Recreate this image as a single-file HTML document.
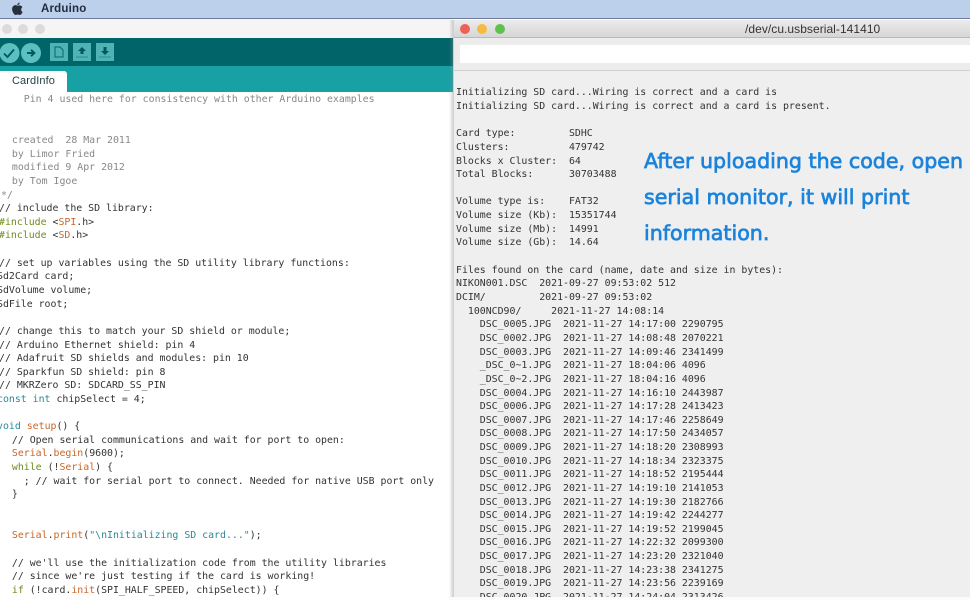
<!DOCTYPE html>
<html><head><meta charset="utf-8">
<style>
html,body{margin:0;padding:0;background:#fff}
#p{position:relative;width:970px;height:600px;overflow:hidden;background:#fff;font-family:"DejaVu Sans Mono","Liberation Mono",monospace}
.a{position:absolute}
.l,.r{position:absolute;white-space:pre;font-size:9.9px;line-height:14px;height:14px;margin-top:1px}
.r{margin-top:1.5px}
.l{color:#333}
.r{color:#333;left:456px}
.c{color:#888}
.o{color:#c8662a}
.g{color:#6f8b1e}
.t{color:#2a8a96}
.b{position:absolute;white-space:pre;left:644px;color:#1a83dc;font-family:"DejaVu Sans",sans-serif;font-weight:normal;font-size:20.6px;line-height:24px;-webkit-text-stroke:.7px #1a83dc}
</style></head><body><div id="p">
<div class="a" style="left:0;top:0;width:970px;height:18px;background:#bccfeb"></div>
<div class="a" style="left:0;top:18px;width:970px;height:1px;background:#6d7c9a"></div>
<svg class="a" style="left:11px;top:2px" width="13" height="14" viewBox="0 0 13 14"><path d="M6.3 3.6C5 3 3.7 3 2.7 3.7 1 4.8.7 7.300 1.600 9.500 2.300 11.300 3.400 13 4.700 13c.8 0 1.100-.5 2-.5s1.200.5 2 .5c1.200 0 2.200-1.500 2.900-3-1.600-.8-2.100-3.500-.2-4.900-.7-1.100-1.900-1.800-3.100-1.700-1 .1-1.500.7-2 .2z" fill="#26303c"/><path d="M6.300 3.200C6.200 1.900 7.300.7 8.600.5c.1 1.400-1 2.600-2.300 2.700z" fill="#26303c"/></svg>
<div class="a" style="left:41px;top:1px;font:bold 11.500px/16px 'Liberation Sans',sans-serif;color:#222c40;letter-spacing:.2px">Arduino</div>

<div class="a" style="left:0;top:19px;width:453px;height:19px;background:#f6f5f5"></div>
<div class="a" style="left:2px;top:24px;width:10px;height:10px;border-radius:50%;background:#dcdcdc"></div>
<div class="a" style="left:18px;top:24px;width:10px;height:10px;border-radius:50%;background:#dcdcdc"></div>
<div class="a" style="left:35px;top:24px;width:10px;height:10px;border-radius:50%;background:#dcdcdc"></div>

<div class="a" style="left:0;top:38px;width:453px;height:28px;background:#006468"></div>
<div class="a" style="left:0;top:66px;width:453px;height:26px;background:#17a1a5"></div>
<svg class="a" style="left:0;top:38px" width="125" height="28" viewBox="0 0 125 28">
<circle cx="9.500" cy="15" r="10" fill="#5cc0c0"/>
<path d="M4 15.500l3.500 3.500 6.500-7.500" fill="none" stroke="#00585c" stroke-width="1.800"/>
<circle cx="31" cy="15" r="10" fill="#5cc0c0"/>
<path d="M27 15h7M31 11.800l3.400 3.200-3.400 3.200" fill="none" stroke="#00585c" stroke-width="1.900"/>
<rect x="50" y="5" width="18" height="18" fill="#4fb2b4"/>
<path d="M55 9h5l3 3v7h-8z" fill="none" stroke="#00686c" stroke-width="1"/>
<rect x="73" y="5" width="18" height="18" fill="#4fb2b4"/>
<path d="M82 9l-4 4h2.500v3h3v-3H86z" fill="#00585c"/><path d="M76 19h12" stroke="#2a8c90" stroke-width="1"/>
<rect x="96" y="5" width="18" height="18" fill="#4fb2b4"/>
<path d="M105 17l4-4h-2.500v-4h-3v4H101z" fill="#00585c"/><path d="M99 19h12" stroke="#2a8c90" stroke-width="1"/>
</svg>
<div class="a" style="left:0;top:71px;width:67px;height:21px;background:#fff;border-radius:0 3px 0 0"></div>
<div class="a" style="left:12px;top:74px;font:11px/15px 'Liberation Sans',sans-serif;color:#1d3f42;letter-spacing:.1px">CardInfo</div>

<div class="l c" style="left:0;top:92px">    Pin 4 used here for consistency with other Arduino examples</div>
<div class="l c" style="left:0;top:133px">  created  28 Mar 2011</div>
<div class="l c" style="left:0;top:147px">  by Limor Fried</div>
<div class="l c" style="left:0;top:160px">  modified 9 Apr 2012</div>
<div class="l c" style="left:0;top:174px">  by Tom Igoe</div>
<div class="l c" style="left:-5px;top:188px"> */</div>
<div class="l" style="left:-1px;top:201px">// include the SD library:</div>
<div class="l" style="left:-1px;top:215px"><span class="g">#include</span> &lt;<span class="o">SPI</span>.h&gt;</div>
<div class="l" style="left:-1px;top:228px"><span class="g">#include</span> &lt;<span class="o">SD</span>.h&gt;</div>
<div class="l" style="left:-1px;top:256px">// set up variables using the SD utility library functions:</div>
<div class="l" style="left:-3px;top:269px">Sd2Card card;</div>
<div class="l" style="left:-3px;top:283px">SdVolume volume;</div>
<div class="l" style="left:-3px;top:297px">SdFile root;</div>
<div class="l" style="left:-1px;top:324px">// change this to match your SD shield or module;</div>
<div class="l" style="left:-1px;top:338px">// Arduino Ethernet shield: pin 4</div>
<div class="l" style="left:-1px;top:351px">// Adafruit SD shields and modules: pin 10</div>
<div class="l" style="left:-1px;top:365px">// Sparkfun SD shield: pin 8</div>
<div class="l" style="left:-1px;top:378px">// MKRZero SD: SDCARD_SS_PIN</div>
<div class="l" style="left:-3px;top:392px"><span class="t">const int</span> chipSelect = 4;</div>
<div class="l" style="left:-3px;top:419px"><span class="t">void</span> <span class="o">setup</span>() {</div>
<div class="l" style="left:0;top:433px">  // Open serial communications and wait for port to open:</div>
<div class="l" style="left:0;top:446px">  <span class="o">Serial</span>.<span class="o">begin</span>(9600);</div>
<div class="l" style="left:0;top:460px">  <span class="g">while</span> (!<span class="o">Serial</span>) {</div>
<div class="l" style="left:0;top:474px">    ; // wait for serial port to connect. Needed for native USB port only</div>
<div class="l" style="left:0;top:487px">  }</div>
<div class="l" style="left:0;top:528px">  <span class="o">Serial</span>.<span class="o">print</span>(<span class="t">"\nInitializing SD card..."</span>);</div>
<div class="l" style="left:0;top:556px">  // we'll use the initialization code from the utility libraries</div>
<div class="l" style="left:0;top:569px">  // since we're just testing if the card is working!</div>
<div class="l" style="left:0;top:583px">  <span class="g">if</span> (!card.<span class="o">init</span>(SPI_HALF_SPEED, chipSelect)) {</div>

<div class="a" style="left:449px;top:20px;width:5px;height:580px;background:linear-gradient(90deg,rgba(160,160,160,0),rgba(140,140,140,.45))"></div>
<div class="a" style="left:454px;top:20px;width:516px;height:17px;background:linear-gradient(#ebebeb,#d6d6d6);border-bottom:1px solid #b9b9b9"></div>
<div class="a" style="left:460px;top:24px;width:10px;height:10px;border-radius:50%;background:#ee6058"></div>
<div class="a" style="left:477px;top:24px;width:10px;height:10px;border-radius:50%;background:#f4bb3e"></div>
<div class="a" style="left:495px;top:24px;width:10px;height:10px;border-radius:50%;background:#5ec14e"></div>
<div class="a" style="left:745px;top:21px;font:12px/16px 'Liberation Sans',sans-serif;color:#333;white-space:pre;letter-spacing:.05px">/dev/cu.usbserial-141410</div>
<div class="a" style="left:454px;top:38px;width:516px;height:33px;background:#ececec"></div>
<div class="a" style="left:460px;top:45px;width:510px;height:18px;background:#fff"></div>
<div class="a" style="left:454px;top:70px;width:516px;height:1px;background:#d0d0d0"></div>
<div class="a" style="left:454px;top:71px;width:516px;height:526px;background:#efefef"></div>

<div class="r" style="top:84px">Initializing SD card...Wiring is correct and a card is</div>
<div class="r" style="top:98px">Initializing SD card...Wiring is correct and a card is present.</div>
<div class="r" style="top:125px">Card type:         SDHC</div>
<div class="r" style="top:139px">Clusters:          479742</div>
<div class="r" style="top:153px">Blocks x Cluster:  64</div>
<div class="r" style="top:166px">Total Blocks:      30703488</div>
<div class="r" style="top:193px">Volume type is:    FAT32</div>
<div class="r" style="top:207px">Volume size (Kb):  15351744</div>
<div class="r" style="top:221px">Volume size (Mb):  14991</div>
<div class="r" style="top:234px">Volume size (Gb):  14.64</div>
<div class="r" style="top:262px">Files found on the card (name, date and size in bytes):</div>
<div class="r" style="top:275px">NIKON001.DSC  2021-09-27 09:53:02 512</div>
<div class="r" style="top:289px">DCIM/         2021-09-27 09:53:02</div>
<div class="r" style="top:303px">  100NCD90/     2021-11-27 14:08:14</div>
<div class="r" style="top:316px">    DSC_0005.JPG  2021-11-27 14:17:00 2290795</div>
<div class="r" style="top:330px">    DSC_0002.JPG  2021-11-27 14:08:48 2070221</div>
<div class="r" style="top:344px">    DSC_0003.JPG  2021-11-27 14:09:46 2341499</div>
<div class="r" style="top:357px">    _DSC_0~1.JPG  2021-11-27 18:04:06 4096</div>
<div class="r" style="top:371px">    _DSC_0~2.JPG  2021-11-27 18:04:16 4096</div>
<div class="r" style="top:385px">    DSC_0004.JPG  2021-11-27 14:16:10 2443987</div>
<div class="r" style="top:398px">    DSC_0006.JPG  2021-11-27 14:17:28 2413423</div>
<div class="r" style="top:412px">    DSC_0007.JPG  2021-11-27 14:17:46 2258649</div>
<div class="r" style="top:425px">    DSC_0008.JPG  2021-11-27 14:17:50 2434057</div>
<div class="r" style="top:439px">    DSC_0009.JPG  2021-11-27 14:18:20 2308993</div>
<div class="r" style="top:453px">    DSC_0010.JPG  2021-11-27 14:18:34 2323375</div>
<div class="r" style="top:466px">    DSC_0011.JPG  2021-11-27 14:18:52 2195444</div>
<div class="r" style="top:480px">    DSC_0012.JPG  2021-11-27 14:19:10 2141053</div>
<div class="r" style="top:494px">    DSC_0013.JPG  2021-11-27 14:19:30 2182766</div>
<div class="r" style="top:507px">    DSC_0014.JPG  2021-11-27 14:19:42 2244277</div>
<div class="r" style="top:521px">    DSC_0015.JPG  2021-11-27 14:19:52 2199045</div>
<div class="r" style="top:534px">    DSC_0016.JPG  2021-11-27 14:22:32 2099300</div>
<div class="r" style="top:548px">    DSC_0017.JPG  2021-11-27 14:23:20 2321040</div>
<div class="r" style="top:562px">    DSC_0018.JPG  2021-11-27 14:23:38 2341275</div>
<div class="r" style="top:575px">    DSC_0019.JPG  2021-11-27 14:23:56 2239169</div>
<div class="r" style="top:589px">    DSC_0020.JPG  2021-11-27 14:24:04 2313426</div>
<div class="a" style="left:449px;top:597px;width:521px;height:3px;background:#fbfbfb"></div>

<div class="b" style="top:149px">After uploading the code, open</div>
<div class="b" style="top:185px">serial monitor, it will print</div>
<div class="b" style="top:221px">information.</div>
</div></body></html>
